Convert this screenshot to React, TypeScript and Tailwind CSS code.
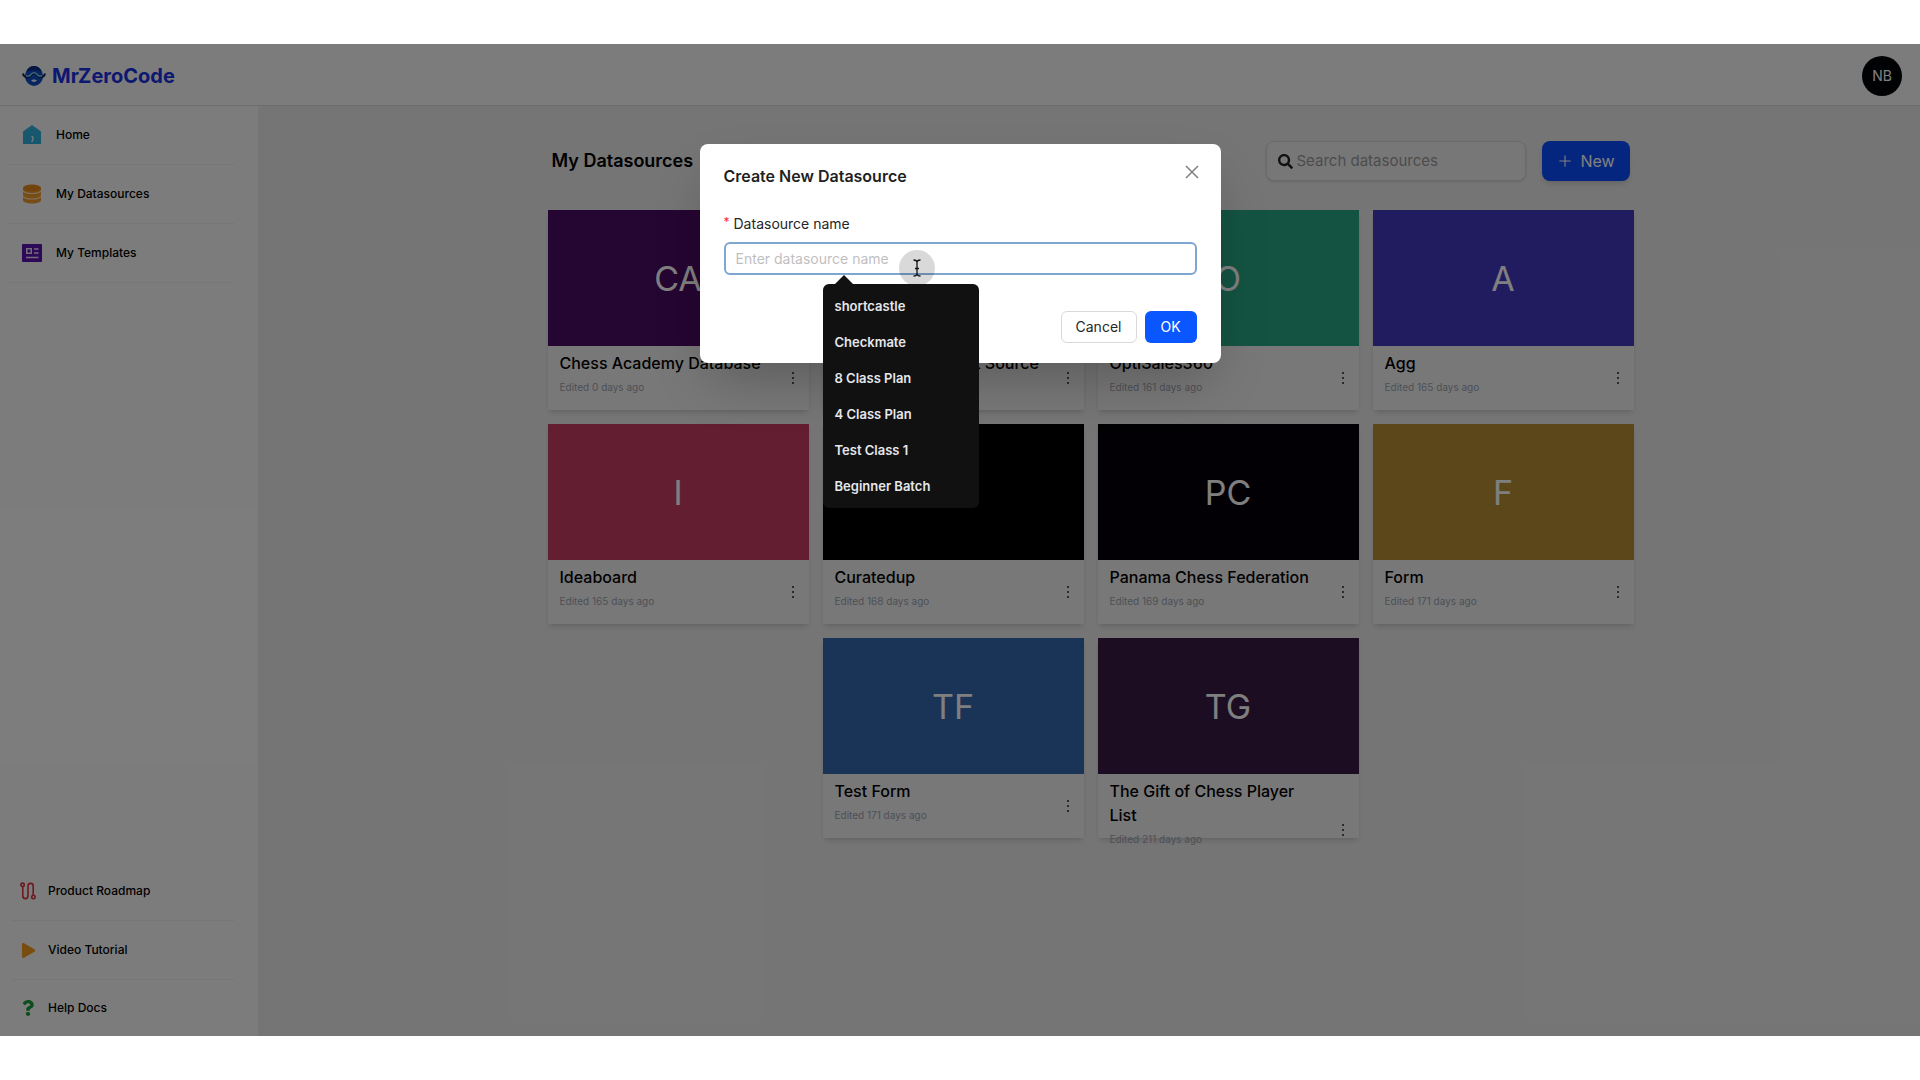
import React, { useState } from "react";
import { FaPlay, FaQuestion, FaSearch } from "react-icons/fa";
import { FiPlus } from "react-icons/fi";

const datasources = [
  { name: "Chess Academy Database", initials: "CA", days: 0, color: "bg-[#4a0a62]" },
  { name: "Chess Assessment Source", initials: "CS", days: 160, color: "bg-[#1f3a8a]" },
  { name: "OptiSales360", initials: "O", days: 161, color: "bg-[#28a684]" },
  { name: "Agg", initials: "A", days: 165, color: "bg-[#4338be]" },
  { name: "Ideaboard", initials: "I", days: 165, color: "bg-[#c63f63]" },
  { name: "Curatedup", initials: "C", days: 168, color: "bg-black" },
  { name: "Panama Chess Federation", initials: "PC", days: 169, color: "bg-[#040108]" },
  { name: "Form", initials: "F", days: 171, color: "bg-[#b98f36]" },
  { name: "Test Form", initials: "TF", days: 171, color: "bg-[#3568b0]" },
  { name: "The Gift of Chess Player List", initials: "TG", days: 211, color: "bg-[#391a44]" },
];

const suggestions = [
  "shortcastle",
  "Checkmate",
  "8 Class Plan",
  "4 Class Plan",
  "Test Class 1",
  "Beginner Batch",
];

const Logo = () => (
  <svg width="24" height="24" viewBox="0 0 24 24" fill="none">
    <ellipse cx="12" cy="12" rx="9" ry="10" fill="#0f4cc4" />
    <path d="M4.500 7.500C6 3.500 9 2 12 2s6 1.500 7.500 5.500c-2.500-1.500-12.500-1.500-15 0z" fill="#0a2f80" />
    <path
      d="M1 9.500c.5 3 3 4.200 5.500 3.600C8.800 12.500 9.500 9.500 12 9.500s3.200 3 5.500 3.600c2.500.6 5-.6 5.500-3.600"
      stroke="#0b2550"
      strokeWidth="2"
    />
    <path
      d="M4 11.800c2.800 1.200 4.200-.2 5.200-1.600 1.400-1.900 4.200-1.900 5.600 0 1 1.400 2.400 2.800 5.200 1.600"
      stroke="#7cc4ee"
      strokeWidth="1.500"
    />
    <path d="M9 16.800c1.500-1.800 4.500-1.800 6 0-1.500 1.500-4.500 1.500-6 0z" fill="#e4f1fb" />
  </svg>
);

const HomeIcon = () => (
  <svg width="20" height="20" viewBox="0 0 20 20">
    <path d="M10 0 19 6.500V19H1V6.500z" fill="#2fb0dc" />
    <path d="M9.500 11.500c1.500.5 1.800 1.500 1.400 2.700L9.800 17" fill="none" stroke="#e6f8ff" strokeWidth="1.400" />
  </svg>
);

const DatabaseIcon = () => (
  <svg width="20" height="20" viewBox="0 0 20 20">
    <path d="M1 4v12c0 2 4 3.500 9 3.500s9-1.500 9-3.500V4z" fill="#f0992b" />
    <ellipse cx="10" cy="4" rx="9" ry="3.500" fill="#e5861a" />
    <path
      d="M1 6.500C2 9 6 9.500 10 9.500s8-.5 9-3M1 12c1 2.500 5 3 9 3s8-.5 9-3"
      fill="none"
      stroke="#fde3bd"
      strokeWidth="1.200"
    />
  </svg>
);

const TemplateIcon = () => (
  <svg width="20" height="18" viewBox="0 0 20 18">
    <rect width="20" height="18" rx="1" fill="#5b12b0" />
    <g fill="none" stroke="#e9d9fb" strokeWidth="1.500">
      <rect x="4.750" y="4.750" width="4.500" height="4.500" />
      <path d="M12 5h4.500M12 9h4.500M4 13.500h12.500" />
    </g>
  </svg>
);

const RoadmapIcon = () => (
  <svg width="16" height="18" viewBox="0 0 16 18" fill="none" stroke="#d8343c" strokeWidth="1.600">
    <circle cx="2.600" cy="2.800" r="1.700" />
    <circle cx="13.400" cy="15" r="1.700" />
    <path d="M2.800 4.500V14a2.600 2.600 0 0 0 5.200 0V4a2.600 2.600 0 0 1 5.200 0v9.300" />
  </svg>
);

const mainLinks = [
  { label: "Home", icon: <HomeIcon /> },
  { label: "My Datasources", icon: <DatabaseIcon /> },
  { label: "My Templates", icon: <TemplateIcon /> },
];

const footerLinks = [
  { label: "Product Roadmap", icon: <RoadmapIcon /> },
  { label: "Video Tutorial", icon: <FaPlay size={15} color="#f39a1d" /> },
  { label: "Help Docs", icon: <FaQuestion size={16} color="#1b9a3c" /> },
];

const Sidebar = () => (
  <aside className="flex w-[258px] shrink-0 flex-col justify-between bg-[#f9f9f9]">
    <nav className="pr-6 pl-2">
      {mainLinks.map((link) => (
        <a
          key={link.label}
          href="#"
          className="flex h-[59px] items-center gap-3.5 border-b border-[#ececec] pl-3.5 text-xs font-medium text-black"
        >
          <span className="flex w-5 justify-center">{link.icon}</span>
          {link.label}
        </a>
      ))}
    </nav>
    <nav className="pr-6 pl-3">
      {footerLinks.map((link) => (
        <a
          key={link.label}
          href="#"
          className="flex h-[59px] items-center gap-3 border-b border-[#ececec] pl-2 text-xs font-medium text-black last:h-14 last:border-b-0"
        >
          <span className="flex w-4 justify-center">{link.icon}</span>
          {link.label}
        </a>
      ))}
    </nav>
  </aside>
);

const DatasourceCard = ({ name, initials, days, color }: (typeof datasources)[number]) => (
  <article className="h-[200px] w-[261px] bg-[#f1f1f1] shadow-md">
    <div className={`flex h-[136px] items-center justify-center text-[34px] text-white ${color}`}>
      {initials}
    </div>
    <div className="flex items-end justify-between pt-[5px] pr-2 pl-3">
      <div className="max-w-[208px]">
        <h2 className="text-base font-medium text-black">{name}</h2>
        <p className="mt-1 text-[10px] leading-4 text-gray-400">Edited {days} days ago</p>
      </div>
      <button aria-label={`Options for ${name}`} className="mb-2 flex w-4 justify-center py-0.5">
        <svg width="4" height="14" viewBox="0 0 4 14" fill="#222">
          <circle cx="2" cy="2" r="1" />
          <circle cx="2" cy="7" r="1" />
          <circle cx="2" cy="12" r="1" />
        </svg>
      </button>
    </div>
  </article>
);

const CreateModal = () => {
  const [name, setName] = useState("");

  return (
    <div
      role="dialog"
      aria-labelledby="modal-title"
      className="relative h-[219px] w-[521px] rounded-lg bg-white px-6 pt-5 shadow-2xl"
    >
      <div className="flex items-start justify-between">
        <h2 id="modal-title" className="text-base font-semibold text-[#1f1f1f]">
          Create New Datasource
        </h2>
        <button aria-label="Close" className="-mr-0.5 pt-px text-[#808080]">
          <svg width="14" height="14" viewBox="0 0 14 14" stroke="currentColor" strokeWidth="1.500">
            <path d="M1 1l12 12M13 1L1 13" />
          </svg>
        </button>
      </div>
      <label htmlFor="datasource-name" className="mt-[26px] flex gap-1 text-sm text-[#262626]">
        <span className="text-xs text-red-500">*</span>
        Datasource name
      </label>
      <div className="relative mt-2">
        <input
          id="datasource-name"
          value={name}
          onChange={(e) => setName(e.target.value)}
          placeholder="Enter datasource name"
          className="h-[33px] w-full rounded-md border-2 border-[#7fa6cf] px-2.5 text-sm outline-none placeholder:text-[#bfbfbf]"
        />
        <div className="absolute top-2 left-[175px] flex size-9 items-center justify-center rounded-full bg-black/15">
          <svg width="10" height="18" viewBox="0 0 10 18" fill="none" stroke="#111" strokeWidth="1.300">
            <path d="M1.500 1C4 1 5 2 5 3.500v11C5 16 4 17 1.500 17M8.500 1C6 1 5 2 5 3.500v11C5 16 6 17 8.500 17M3 9.500h4" />
          </svg>
        </div>
        <div className="absolute top-[33px] left-[99px] w-[156px]">
          <svg width="18" height="9" viewBox="0 0 18 9" className="ml-3" fill="#111">
            <path d="M0 9 9 0l9 9z" />
          </svg>
          <ul className="rounded-md bg-[#111] py-1 text-[13px] font-semibold text-gray-200">
            {suggestions.map((item) => (
              <li key={item} className="h-9 px-3 leading-9">
                {item}
              </li>
            ))}
          </ul>
        </div>
      </div>
      <div className="mt-9 flex justify-end gap-2 text-sm">
        <button className="h-8 w-[76px] rounded-md border border-[#d9d9d9] text-[#262626]">
          Cancel
        </button>
        <button className="h-8 w-[52px] rounded-md bg-[#0b57ff] text-white">OK</button>
      </div>
    </div>
  );
};

const App = () => {
  const [search, setSearch] = useState("");

  return (
    <div className="flex min-h-screen flex-col bg-white py-11 font-['Inter',sans-serif]">
      <div className="relative flex flex-1 flex-col">
        <header className="flex h-[62px] items-center justify-between border-b border-[#dcdcdc] bg-[#f9f9f9] pt-[3px] pr-[18px] pl-[22px]">
          <div className="flex items-center gap-1.5 text-xl font-bold text-[#1a30e0]">
            <Logo />
            MrZeroCode
          </div>
          <div className="flex size-10 items-center justify-center rounded-full bg-[#030508] text-sm text-white">
            NB
          </div>
        </header>
        <div className="flex flex-1">
          <Sidebar />
          <main className="flex-1 bg-[#ebebeb] pt-[35px] pl-[3px]">
            <div className="mx-auto w-full max-w-[1086px]">
              <div className="flex items-center gap-4 pr-1 pl-1">
                <h1 className="mr-auto text-lg font-semibold text-black">My Datasources</h1>
                <label className="flex h-10 w-[260px] items-center gap-1 rounded-lg border border-[#d4d4d4] bg-[#efefef] px-[11px] shadow-sm">
                  <FaSearch size={15} color="#222" className="shrink-0" />
                  <input
                    aria-label="Search datasources"
                    value={search}
                    onChange={(e) => setSearch(e.target.value)}
                    placeholder="Search datasources"
                    className="w-full bg-transparent text-[15px] outline-none placeholder:text-[#999]"
                  />
                </label>
                <button className="flex h-10 w-[88px] items-center justify-center gap-1.5 rounded-lg bg-[#0b4dff] text-base text-white shadow-md">
                  <FiPlus size={18} strokeWidth={1.5} />
                  New
                </button>
              </div>
              <div className="mt-[29px] flex flex-wrap justify-center gap-3.5">
                {datasources.map((item) => (
                  <DatasourceCard key={item.name} {...item} />
                ))}
              </div>
            </div>
          </main>
        </div>
        <div className="absolute inset-0 flex items-start justify-center bg-black/50 pt-[100px]">
          <CreateModal />
        </div>
      </div>
    </div>
  );
};

export default App;
